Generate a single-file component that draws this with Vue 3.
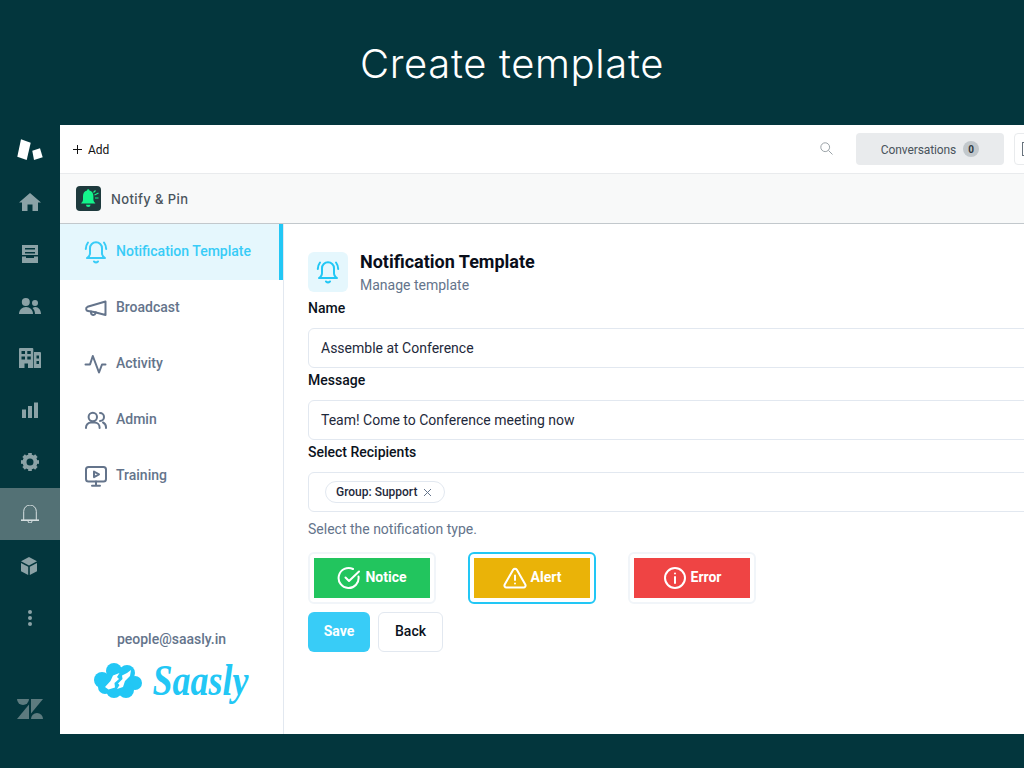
<script setup>
const rail = [
  { id: 'home', active: false },
  { id: 'inbox', active: false },
  { id: 'users', active: false },
  { id: 'org', active: false },
  { id: 'bars', active: false },
  { id: 'gear', active: false },
  { id: 'bell', active: true },
  { id: 'box', active: false },
  { id: 'dots', active: false }
]
const teeth = [0, 45, 90, 135, 180, 225, 270, 315]
const nav = [
  { id: 'bell', label: 'Notification Template', active: true },
  { id: 'mega', label: 'Broadcast', active: false },
  { id: 'activity', label: 'Activity', active: false },
  { id: 'admin', label: 'Admin', active: false },
  { id: 'training', label: 'Training', active: false }
]
const types = [
  { id: 'notice', label: 'Notice', selected: false },
  { id: 'alert', label: 'Alert', selected: true },
  { id: 'error', label: 'Error', selected: false }
]
</script>

<template>
  <div class="page">
    <h1 class="headline">Create template</h1>
    <div class="frame">
      <aside class="rail">
        <div class="rail-logo">
          <svg width="26" height="22" viewBox="0 0 26 22" fill="#fff">
            <path d="M4 0.300 13.700 3.700 9.700 21 0.300 17.700z" />
            <path d="M15.300 11.700 23 9.300 25.700 18.300 17 21z" />
          </svg>
        </div>
        <div v-for="r in rail" :key="r.id" class="rail-item" :class="{ on: r.active }">
          <svg v-if="r.id === 'home'" width="22" height="18" viewBox="0 0 22 18" fill="currentColor"><path d="M11 0 22 9.500h-3V18h-5.500V11.500h-5V18H3V9.500H0z" /></svg>
          <svg v-else-if="r.id === 'inbox'" width="16" height="18" viewBox="0 0 16 18" fill="currentColor"><path fill-rule="evenodd" d="M0 0h16v10H0zm3 3v1.500h10V3zm0 4v1.500h10V7z" /><path d="M0 11.500h4V13h8v-1.500h4V18H0z" /></svg>
          <svg v-else-if="r.id === 'users'" width="22" height="16" viewBox="0 0 22 16" fill="currentColor"><circle cx="6.800" cy="4" r="4" /><circle cx="16" cy="5" r="3" /><path d="M0 16c0-4 3-7 7-7s7 3 7 7z" /><path d="M13.500 10c1-.7 2-1 3-1 3 0 5.500 3 5.500 7h-6c0-2.500-1-4.700-2.500-6z" /></svg>
          <svg v-else-if="r.id === 'org'" width="22" height="20" viewBox="0 0 22 20" fill="currentColor"><path fill-rule="evenodd" d="M0 1a1 1 0 0 1 1-1h12.300a1 1 0 0 1 1 1v19H9v-4.500H5.500V20H0zm2.500 2v3h3.500V3zm5.800 0v3h3.500V3zM2.500 8.500v3h3.500v-3zm5.800 0v3h3.500v-3z" /><path fill-rule="evenodd" d="M15 4h6a1 1 0 0 1 1 1v15h-7zm2.500 3.500v3h2.500v-3zm0 5.500v3h2.500v-3z" /></svg>
          <svg v-else-if="r.id === 'bars'" width="16" height="16" viewBox="0 0 16 16" fill="currentColor"><rect x="0" y="7.500" width="4" height="8.500" /><rect x="6" y="4" width="4" height="12" /><rect x="12" y="0.500" width="4" height="15.500" /></svg>
          <svg v-else-if="r.id === 'gear'" width="18" height="18" viewBox="0 0 18 18" fill="currentColor"><circle cx="9" cy="9" r="5.500" fill="none" stroke="currentColor" stroke-width="4" /><rect v-for="a in teeth" :key="a" x="7.200" y="0" width="3.600" height="3.500" :transform="`rotate(${a} 9 9)`" /></svg>
          <svg v-else-if="r.id === 'bell'" width="18" height="18" viewBox="0 0 18 18" fill="none" stroke="#d6dfe0" stroke-width="1"><path d="M2.700 15V6.300a6.300 6.300 0 0 1 12.600 0V15" /><path d="M0 15.200h18" stroke-width="1.600" /><path d="M7 16a2 2 0 0 0 4 0" /></svg>
          <svg v-else-if="r.id === 'box'" class="box-icon" width="16" height="18" viewBox="0 0 16 18" fill="currentColor"><path d="M8 0 16 4.200 8 8.400 0 4.200z" /><path d="M0 6 7.200 9.800V18L0 14.200z" /><path d="M16 6 8.800 9.800V18L16 14.200z" /></svg>
          <svg v-else width="6" height="18" viewBox="0 0 6 18" fill="currentColor"><circle cx="3" cy="3" r="2" /><circle cx="3" cy="9" r="2" /><circle cx="3" cy="15" r="2" /></svg>
        </div>
        <div class="rail-foot">
          <svg width="26" height="20" viewBox="0 0 26 20" fill="#5d7b7f">
            <path d="M0 0h12a6 6 0 0 1-12 0z" />
            <path d="M12 5.500V20H0z" />
            <path d="M14 0h12L14 14.500z" />
            <path d="M14 20a6 6 0 0 1 12 0z" />
          </svg>
        </div>
      </aside>

      <div class="body">
        <header class="topbar">
          <div class="add">
            <svg width="9" height="9" viewBox="0 0 9 9" stroke="#111" stroke-width="1"><path d="M4.500 0v9M0 4.500h9" /></svg>
            <span class="bar-text">Add</span>
          </div>
          <svg class="search" width="13" height="13" viewBox="0 0 13 13" fill="none" stroke="#9aa2a7" stroke-width="1"><circle cx="5.200" cy="5.200" r="4.400" /><path d="M8.400 8.400 12.500 12.500" /></svg>
          <div class="conv"><span class="bar-text conv-text">Conversations</span><span class="count">0</span></div>
          <div class="tool"><span class="tool-glyph"></span></div>
        </header>
        <div class="apphead">
          <span class="appicon">
            <svg width="25" height="25" viewBox="0 0 25 25">
              <path fill="#14f58c" d="M11 4.500a1.200 1.200 0 0 1 2.400 0c2.800.7 4 3 4 5.800v3.200c0 1.700 1 2.700 2 4H5c1-1.300 2-2.300 2-4v-3.200c0-2.800 1.200-5.100 4-5.800z" />
              <path fill="#14f58c" d="M10 18.800h4.500a2.250 2.250 0 0 1-4.500 0z" />
              <path fill="none" stroke="#14f58c" stroke-width="1.200" d="M18.500 9 22.500 7M19 12h3.500M17.500 6.500 19.500 4.500" />
            </svg>
          </span>
          <span class="appname">Notify &amp; Pin</span>
        </div>
        <div class="workspace">
          <nav class="side">
            <div v-for="n in nav" :key="n.id" class="nav-item" :class="{ on: n.active }">
              <svg class="nav-icon" width="24" height="24" viewBox="0 0 24 24" fill="none" stroke="currentColor" stroke-width="2" stroke-linecap="round" stroke-linejoin="round">
                <template v-if="n.id === 'bell'">
                  <path d="M12 2.200a6 6 0 0 0-6 6v4a6 6 0 0 1-3 5.800h18a6 6 0 0 1-3-5.800v-4a6 6 0 0 0-6-6z" />
                  <path d="M10 21.500a3 3 0 0 0 4 0" />
                  <path d="M1.800 9A11 11 0 0 1 4 2.500" />
                  <path d="M22.200 9A11 11 0 0 0 20 2.500" />
                </template>
                <template v-else-if="n.id === 'mega'">
                  <path d="M21.500 5.500v13.500L10 16 4 15a2.200 2.200 0 0 1-.5-4.200z" />
                  <path d="M7 15.500v1.300a2.300 2.300 0 0 0 4.500.5l.3-1" />
                </template>
                <template v-else-if="n.id === 'activity'">
                  <path d="M1.500 12.500h4.500l2.800-8.500 6.200 16.500 3-8h3.500" />
                </template>
                <template v-else-if="n.id === 'admin'">
                  <circle cx="8.800" cy="9" r="4.200" />
                  <path d="M2 20v-.5a5 5 0 0 1 5-5h3.600a5 5 0 0 1 5 5v.5" />
                  <path d="M16 5a4 4 0 0 1 0 8" />
                  <path d="M22 20v-1a5 5 0 0 0-3-4.500" />
                </template>
                <template v-else>
                  <rect x="2" y="3" width="20" height="14.500" rx="2.500" />
                  <path d="M12 17.500V21.500M8 21.800h8" />
                  <path d="M10 7.500l5 2.800-5 2.800z" />
                </template>
              </svg>
              <span class="nav-label">{{ n.label }}</span>
            </div>
            <div class="side-foot">
              <div class="email">people@saasly.in</div>
              <div class="brand">
                <svg width="48" height="35" viewBox="0 0 48 35">
                  <g fill="#22c7f5">
                    <circle cx="8" cy="17" r="8" /><circle cx="20" cy="8" r="8" /><circle cx="33" cy="10" r="8" /><circle cx="41" cy="20" r="7" /><circle cx="32" cy="27" r="8" /><circle cx="20" cy="27" r="8" /><circle cx="11" cy="24" r="7" /><circle cx="24" cy="18" r="13" />
                  </g>
                  <path fill="#fff" d="M11 24 16.500 18 19 12.500 25.500 10 23 14 25 16 20.500 20 21 24.500 14.500 26.500z" />
                  <path fill="#fff" d="M37 7 36 13 31 18 29 24 23 26 25.500 22 24 20.500 28.500 16 28 12.500 33 10z" />
                </svg>
                <span class="wordmark">Saasly</span>
              </div>
            </div>
          </nav>
          <main class="main">
            <div class="page-head">
              <span class="tile">
                <svg width="24" height="24" viewBox="0 0 24 24" fill="none" stroke="#22c7f5" stroke-width="2" stroke-linecap="round" stroke-linejoin="round">
                  <path d="M12 2.200a6 6 0 0 0-6 6v4a6 6 0 0 1-3 5.800h18a6 6 0 0 1-3-5.800v-4a6 6 0 0 0-6-6z" />
                  <path d="M10 21.500a3 3 0 0 0 4 0" />
                  <path d="M1.800 9A11 11 0 0 1 4 2.500" />
                  <path d="M22.200 9A11 11 0 0 0 20 2.500" />
                </svg>
              </span>
              <div>
                <div class="page-title">Notification Template</div>
                <div class="page-sub">Manage template</div>
              </div>
            </div>
            <label class="field-label">Name</label>
            <div class="input">Assemble at Conference</div>
            <label class="field-label">Message</label>
            <div class="input">Team! Come to Conference meeting now</div>
            <label class="field-label">Select Recipients</label>
            <div class="input chips">
              <span class="chip">Group: Support
                <svg width="9" height="9" viewBox="0 0 9 9" stroke="#64748b" stroke-width="1"><path d="M1 1l7 7M8 1 1 8" /></svg>
              </span>
            </div>
            <div class="hint">Select the notification type.</div>
            <div class="types">
              <div v-for="t in types" :key="t.id" class="type" :class="{ selected: t.selected }">
                <div class="type-inner" :class="t.id">
                  <svg width="24" height="24" viewBox="0 0 24 24" fill="none" stroke="#fff" stroke-width="2" stroke-linecap="round" stroke-linejoin="round">
                    <template v-if="t.id === 'notice'">
                      <path d="M21.500 10.500A10 10 0 1 1 16 3" />
                      <path d="M8.500 11.500l3.500 3.500L22 5.500" />
                    </template>
                    <template v-else-if="t.id === 'alert'">
                      <path d="M10.300 3.600 1.700 18.500A2 2 0 0 0 3.400 21.500h17.200a2 2 0 0 0 1.700-3L13.700 3.600a2 2 0 0 0-3.400 0z" />
                      <path d="M12 9.500v4.500M12 17.500v.01" />
                    </template>
                    <template v-else>
                      <circle cx="12" cy="12" r="10" />
                      <path d="M12 11v6M12 7.500v.01" />
                    </template>
                  </svg>
                  <span class="type-label">{{ t.label }}</span>
                </div>
              </div>
            </div>
            <div class="actions">
              <button class="btn save">Save</button>
              <button class="btn back">Back</button>
            </div>
          </main>
        </div>
      </div>
    </div>
  </div>
</template>

<style>
html, body { margin: 0; background: #03363d; }
</style>

<style scoped>
.page {
  width: 1024px;
  height: 768px;
  overflow: hidden;
  background: #03363d;
  display: flex;
  flex-direction: column;
  font-family: Roboto, "Liberation Sans", sans-serif;
}
.headline {
  margin: 0;
  height: 125px;
  flex: none;
  display: flex;
  align-items: center;
  justify-content: center;
  color: #fff;
  font-family: Inter, sans-serif;
  font-size: 40px;
  font-weight: 300;
  letter-spacing: 0.65px;
  padding-top: 2px;
  box-sizing: border-box;
}
.frame {
  height: 609px;
  flex: none;
  display: flex;
  overflow: hidden;
}
.rail {
  width: 60px;
  flex: none;
  display: flex;
  flex-direction: column;
  color: #8ba2a6;
}
.rail-logo {
  height: 51px;
  display: flex;
  align-items: center;
  justify-content: center;
  padding-bottom: 2px;
  box-sizing: border-box;
}
.rail-item {
  height: 52px;
  display: flex;
  align-items: center;
  justify-content: center;
}
.rail-item.on { background: #537175; }
.box-icon { margin-right: 2px; }
.rail-foot {
  margin-top: auto;
  padding-bottom: 15px;
  display: flex;
  justify-content: center;
}
.body {
  flex: 1;
  min-width: 0;
  background: #fff;
  display: flex;
  flex-direction: column;
}
.topbar {
  height: 49px;
  flex: none;
  box-sizing: border-box;
  border-bottom: 1px solid #e9ebed;
  display: flex;
  align-items: center;
  padding-left: 13px;
}
.add {
  display: flex;
  align-items: center;
  gap: 6px;
  font-size: 12px;
  color: #111;
}
.bar-text { margin-top: 2px; }
.search { margin-left: auto; margin-right: 23px; margin-top: -2px; }
.conv {
  width: 148px;
  height: 32px;
  box-sizing: border-box;
  background: #e9ebed;
  border-radius: 4px;
  display: flex;
  align-items: center;
  justify-content: center;
  gap: 7px;
  font-size: 12px;
  color: #49545c;
}
.conv-text { letter-spacing: -0.1px; }
.count {
  width: 16px;
  height: 16px;
  border-radius: 50%;
  background: #c2c8cc;
  color: #2f3941;
  font-size: 10px;
  font-weight: 700;
  display: flex;
  align-items: center;
  justify-content: center;
}
.tool {
  width: 40px;
  height: 32px;
  flex: none;
  box-sizing: border-box;
  margin-left: 10px;
  margin-right: -30px;
  border: 1px solid #e9ebed;
  border-radius: 4px;
  padding: 8px 7px;
}
.tool-glyph {
  display: block;
  width: 12px;
  height: 14px;
  box-sizing: border-box;
  border: 1px solid #68737d;
}
.apphead {
  height: 50px;
  flex: none;
  box-sizing: border-box;
  background: #f8f9f9;
  border-bottom: 1px solid #c2c8cc;
  display: flex;
  align-items: center;
  padding-left: 16px;
  gap: 10px;
}
.appicon {
  width: 25px;
  height: 25px;
  background: #1e3a3d;
  border-radius: 4px;
  display: flex;
}
.appname {
  font-family: Inter, sans-serif;
  font-size: 13px;
  font-weight: 500;
  letter-spacing: 0.4px;
  color: #49545c;
}
.workspace {
  flex: 1;
  min-height: 0;
  display: flex;
}
.side {
  width: 224px;
  flex: none;
  box-sizing: border-box;
  border-right: 1px solid #e2e8f0;
  display: flex;
  flex-direction: column;
}
.nav-item {
  height: 56px;
  flex: none;
  box-sizing: border-box;
  display: flex;
  align-items: center;
  gap: 8px;
  padding-left: 24px;
  font-size: 14px;
  font-weight: 500;
  color: #64748b;
}
.nav-label { margin-top: -2px; }
.nav-item.on {
  background: #e5f7fd;
  color: #38ccf7;
  border-right: 4px solid #22c7f5;
}
.nav-icon { flex: none; }
.side-foot {
  margin-top: auto;
  padding-bottom: 31px;
  display: flex;
  flex-direction: column;
  align-items: center;
}
.email {
  font-size: 14px;
  font-weight: 500;
  color: #64748b;
  line-height: 20px;
  margin-bottom: 8px;
}
.brand {
  height: 46px;
  display: flex;
  align-items: center;
  gap: 10px;
}
.wordmark {
  flex: none;
  font-family: "Liberation Serif", serif;
  font-style: italic;
  font-weight: 700;
  font-size: 36px;
  line-height: 46px;
  color: #22c7f5;
  transform: scaleY(1.25);
}
.main {
  flex: 1;
  min-width: 0;
  padding: 28px 0 0 24px;
}
.page-head {
  display: flex;
  align-items: center;
  gap: 12px;
  height: 40px;
  margin-bottom: 6px;
}
.tile {
  width: 40px;
  height: 40px;
  flex: none;
  background: #e5f7fd;
  border-radius: 6px;
  display: flex;
  align-items: center;
  justify-content: center;
}
.page-title {
  font-size: 18px;
  font-weight: 700;
  line-height: 24px;
  color: #090e1a;
}
.page-sub {
  font-size: 14px;
  line-height: 20px;
  margin-top: 1px;
  color: #64748b;
}
.field-label {
  display: block;
  height: 20px;
  font-size: 14px;
  font-weight: 500;
  line-height: 20px;
  color: #0b1220;
  margin-bottom: 10px;
}
.input {
  width: 800px;
  height: 40px;
  box-sizing: border-box;
  border: 1px solid #e2e8f0;
  border-radius: 6px;
  padding: 0 12px;
  font-size: 14px;
  color: #1e293b;
  display: flex;
  align-items: center;
  margin-bottom: 2px;
}
.chips { padding-left: 16px; }
.chip {
  height: 22px;
  box-sizing: border-box;
  border: 1px solid #e2e8f0;
  border-radius: 11px;
  padding: 0 12px 0 10px;
  display: flex;
  align-items: center;
  gap: 6px;
  font-size: 12px;
  font-weight: 500;
  color: #1e293b;
}
.hint {
  margin-top: 7px;
  font-size: 14px;
  line-height: 20px;
  color: #64748b;
}
.types {
  display: flex;
  gap: 32px;
  margin-top: 13px;
}
.type {
  width: 128px;
  height: 52px;
  box-sizing: border-box;
  border: 2px solid #f1f5f9;
  border-radius: 6px;
  padding: 4px;
}
.type.selected { border-color: #22c7f5; }
.type-inner {
  height: 40px;
  display: flex;
  align-items: center;
  justify-content: center;
  gap: 4px;
  color: #fff;
  font-size: 14px;
  font-weight: 700;
}
.type-label { margin-top: -2px; }
.notice { background: #22c55e; }
.alert { background: #eab308; }
.error { background: #ef4444; }
.actions {
  display: flex;
  gap: 8px;
  margin-top: 8px;
}
.btn {
  height: 40px;
  box-sizing: border-box;
  border-radius: 6px;
  font-family: Roboto, sans-serif;
  font-size: 14px;
  font-weight: 500;
  padding: 0 0 2px;
}
.save {
  width: 62px;
  border: none;
  background: #38ccf7;
  color: #fff;
  font-weight: 700;
}
.back {
  width: 65px;
  border: 1px solid #e2e8f0;
  background: #fff;
  color: #0b1220;
}
</style>
